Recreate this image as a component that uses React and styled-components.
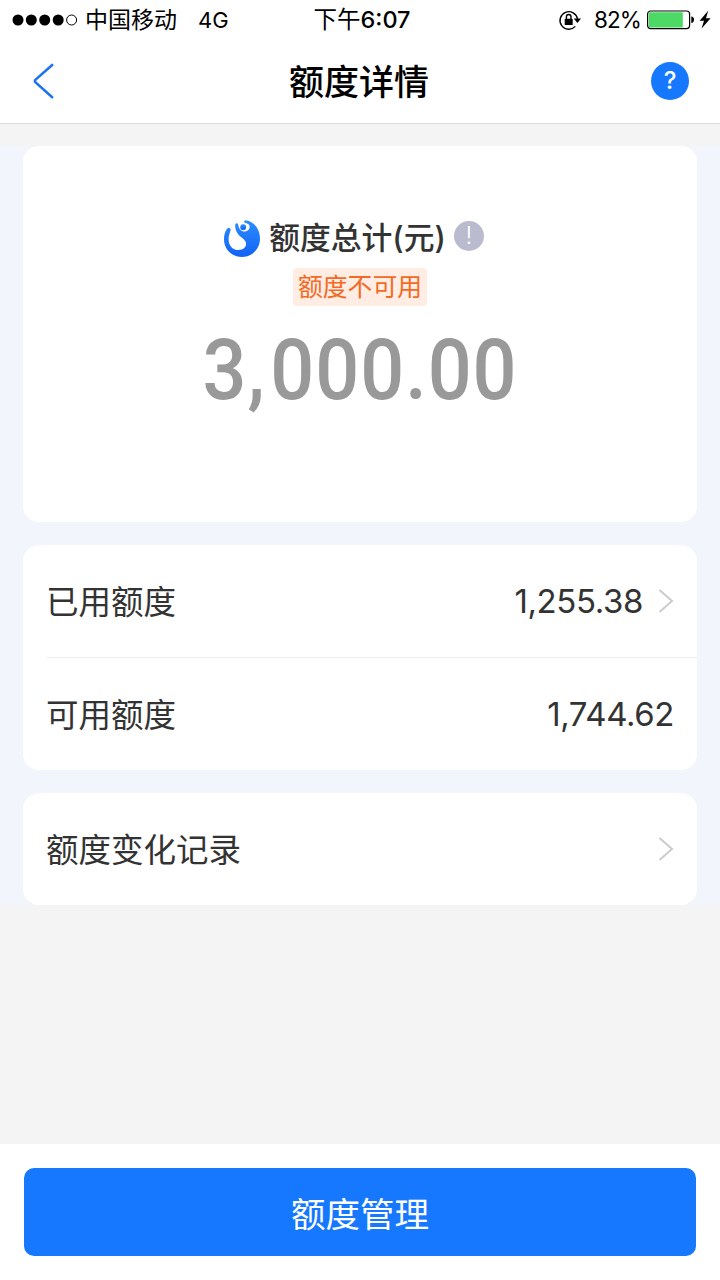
import React from 'react';
import styled, { createGlobalStyle } from 'styled-components';

const App = () => (
  <>
    <GlobalStyle />
    <Page>
      <StatusBar>
        <Carrier>
          <Signal width='66' height='12' viewBox='0 0 66 12'>
            <circle cx='6' cy='6' r='5.5' />
            <circle cx='19.3' cy='6' r='5.5' />
            <circle cx='32.7' cy='6' r='5.5' />
            <circle cx='46.2' cy='6' r='5.5' />
            <circle cx='59.6' cy='6' r='5' fill='none' stroke='#000' />
          </Signal>
          <span>中国移动</span>
          <Network>4G</Network>
        </Carrier>
        <Clock>
          下午<b>6:07</b>
        </Clock>
        <Power>
          <RotationLock />
          <Percent>82%</Percent>
          <Battery />
        </Power>
      </StatusBar>
      <Header>
        <IconButton aria-label='返回'>
          <svg width='24' height='38' viewBox='0 0 24 38' fill='none'>
            <path
              d='M21.2 3 L4.6 17.6 Q3.2 19 4.6 20.4 L21.2 35.2'
              stroke='#1d74f0'
              strokeWidth='2.6'
              strokeLinecap='round'
            />
          </svg>
        </IconButton>
        <Title>额度详情</Title>
        <Help>?</Help>
      </Header>
      <Content>
        <Cards>
          <TotalCard>
            <TotalTitle>
              <Logo />
              <TotalLabel>额度总计(元)</TotalLabel>
              <Info>!</Info>
            </TotalTitle>
            <Tag>额度不可用</Tag>
            <Total>
              3<Comma>,</Comma>000.00
            </Total>
          </TotalCard>
          <Card>
            <Row>
              <Label>已用额度</Label>
              <Amount>1,255.38</Amount>
              <Chevron />
            </Row>
            <Row $divided>
              <Label>可用额度</Label>
              <Amount>1,744.62</Amount>
            </Row>
          </Card>
          <Card>
            <Row>
              <Label>额度变化记录</Label>
              <Chevron />
            </Row>
          </Card>
        </Cards>
      </Content>
      <Footer>
        <Button>额度管理</Button>
      </Footer>
    </Page>
  </>
);

export default App;

const RotationLock = () => (
  <svg width='24' height='22' viewBox='0 0 24 22' fill='none'>
    <path d='M17.3 17.4 A8.8 8.8 0 1 1 19.5 10' stroke='#000' strokeWidth='1.4' />
    <path d='M15.8 9.6 H23 L19.4 14 Z' fill='#000' />
    <rect x='6.7' y='9.8' width='8' height='6.2' rx='0.6' fill='#000' />
    <path d='M8.4 10 V7.8 A2.3 2.3 0 0 1 13 7.8 V10' stroke='#000' strokeWidth='1.4' />
  </svg>
);

const Battery = () => (
  <svg width='66' height='22' viewBox='0 0 66 22'>
    <rect x='1.6' y='2' width='42' height='17.6' rx='3' fill='#fff' stroke='#000' strokeWidth='1.2' />
    <rect x='2.8' y='3.2' width='34' height='15.2' rx='1' fill='#4cd964' />
    <path d='M45.3 7.6 Q48 7.8 48 10.8 Q48 13.8 45.3 14 Z' />
    <path d='M62.2 1.8 L53.6 11.8 H58 L55.6 19.6 L64.6 9.2 H60 Z' />
  </svg>
);

const Logo = () => (
  <svg width='38' height='40' viewBox='0 0 38 40'>
    <defs>
      <linearGradient id='logo' x1='0' y1='0' x2='0' y2='1'>
        <stop offset='0' stopColor='#2b8cff' />
        <stop offset='1' stopColor='#1263f5' />
      </linearGradient>
    </defs>
    <path
      d='M3.4 10.8 C4.6 8.2 8 8.8 7.6 11.2 C7 13.6 5.6 16 5.6 20.4 C5.6 26.6 10 31 15.4 31 C21 31 24.4 27 22.6 22.8 C21.4 20 18.6 18.6 16 16.2 C13.2 13.4 12 9.6 12.2 6 C12.4 3.8 14.8 3.6 15.2 5.8 C15.8 10.4 18.4 12.8 22 12.6 C26 12.2 28 8.4 25.8 5.6 C24.6 4.2 22.4 4.4 21.4 3.2 C20.4 1.8 21.6 1 24 1.6 C31.6 3.4 37 10.8 37 19.6 C37 30 29 38 19 38 C8.8 38 1 30 1 20.5 C1 16.5 1.8 13.4 3.4 10.8 Z'
      fill='url(#logo)'
    />
    <circle cx='20.2' cy='8.2' r='2.9' fill='url(#logo)' />
  </svg>
);

const Chevron = () => (
  <ChevronIcon width='16' height='26' viewBox='0 0 16 26' fill='none'>
    <path d='M1.5 2 L14 13 L1.5 24' stroke='#ccc' strokeWidth='2' />
  </ChevronIcon>
);

const GlobalStyle = createGlobalStyle`
  body {
    margin: 0;
    background: #f4f4f4;
    font-family: Inter, 'Noto Sans CJK SC', sans-serif;
    color: #333;
  }
`;

const Page = styled.div`
  width: 720px;
  height: 1280px;
  display: flex;
  flex-direction: column;
  overflow: hidden;
`;

const StatusBar = styled.div`
  height: 40px;
  display: grid;
  grid-template-columns: 1fr auto 1fr;
  align-items: center;
  box-sizing: border-box;
  padding: 0 8px 0 12px;
  background: #fff;
  color: #000;
  font-size: 23px;
  line-height: 40px;
`;

const Carrier = styled.div`
  display: flex;
  align-items: center;
`;

const Signal = styled.svg`
  margin-right: 7px;
`;

const Network = styled.span`
  margin-left: 21px;
  font-size: 22px;
`;

const Clock = styled.div`
  font-size: 23.5px;

  b {
    font-weight: 500;
  }
`;

const Power = styled.div`
  display: flex;
  align-items: center;
  justify-content: flex-end;
`;

const Percent = styled.span`
  margin: 0 5px 0 12px;
  font-size: 22.5px;
  letter-spacing: -0.9px;
`;

const Header = styled.header`
  height: 84px;
  display: flex;
  align-items: center;
  justify-content: space-between;
  box-sizing: border-box;
  padding: 0 31px 2px;
  background: #fff;
  border-bottom: 1px solid #ddd;
`;

const IconButton = styled.button`
  width: 38px;
  padding: 0;
  border: none;
  background: none;
  display: flex;
`;

const Title = styled.h1`
  margin: 0 2px 2px 0;
  color: #000;
  font-size: 35px;
  font-weight: 500;
`;

const Help = styled.span`
  width: 38px;
  height: 38px;
  border-radius: 50%;
  background: #1677ff;
  color: #fff;
  font-size: 24px;
  font-weight: 500;
  line-height: 38px;
  text-align: center;
`;

const Content = styled.main`
  flex: 1;
  padding-top: 22px;
`;

const Cards = styled.div`
  display: flex;
  flex-direction: column;
  gap: 23px;
  padding: 0 23px;
  background: #f2f6fc;
`;

const Card = styled.section`
  border-radius: 16px;
  background: #fff;
`;

const TotalCard = styled(Card)`
  height: 376px;
  box-sizing: border-box;
  padding-top: 68px;
  display: flex;
  flex-direction: column;
  align-items: center;
`;

const TotalTitle = styled.div`
  display: flex;
  align-items: center;
  height: 48px;
  margin-right: 13px;
  font-size: 30.8px;
  font-weight: 500;

  & > svg {
    margin-top: 2px;
  }
`;

const TotalLabel = styled.span`
  margin: 0 8px 5px;
`;

const Info = styled.span`
  width: 30px;
  height: 30px;
  margin-bottom: 4px;
  border-radius: 50%;
  background: #bbbbcf;
  color: #fff;
  font-size: 24px;
  font-weight: 300;
  line-height: 30px;
  text-align: center;
`;

const Tag = styled.div`
  height: 38px;
  margin-top: 6px;
  padding: 0 5px;
  border-radius: 4px;
  background: #ffece3;
  color: #f26a24;
  font-size: 24.8px;
  line-height: 38px;
`;

const Total = styled.div`
  margin: 12px 0 0 1px;
  color: #999;
  font-family: Roboto, sans-serif;
  font-size: 86px;
  font-weight: 500;
  line-height: 104px;
  letter-spacing: 1.1px;
  transform: scaleX(0.9);
`;

const Comma = styled.span`
  letter-spacing: 6px;
`;

const Row = styled.div`
  height: ${({ $divided }) => ($divided ? '113px' : '112px')};
  display: flex;
  align-items: center;
  box-sizing: border-box;
  margin-left: 23px;
  padding-right: 23px;
  border-top: ${({ $divided }) => ($divided ? '1px solid #eee' : 'none')};
`;

const Label = styled.span`
  flex: 1;
  padding-bottom: 4px;
  font-size: 32.5px;
`;

const Amount = styled.span`
  font-size: 33px;
  letter-spacing: -0.4px;
`;

const ChevronIcon = styled.svg`
  margin-left: 15px;
`;

const Footer = styled.footer`
  height: 136px;
  box-sizing: border-box;
  padding: 24px;
  background: #fff;
`;

const Button = styled.button`
  width: 100%;
  height: 88px;
  border: none;
  border-radius: 10px;
  background: #1677ff;
  color: #fff;
  font-family: inherit;
  font-size: 34.5px;
`;
